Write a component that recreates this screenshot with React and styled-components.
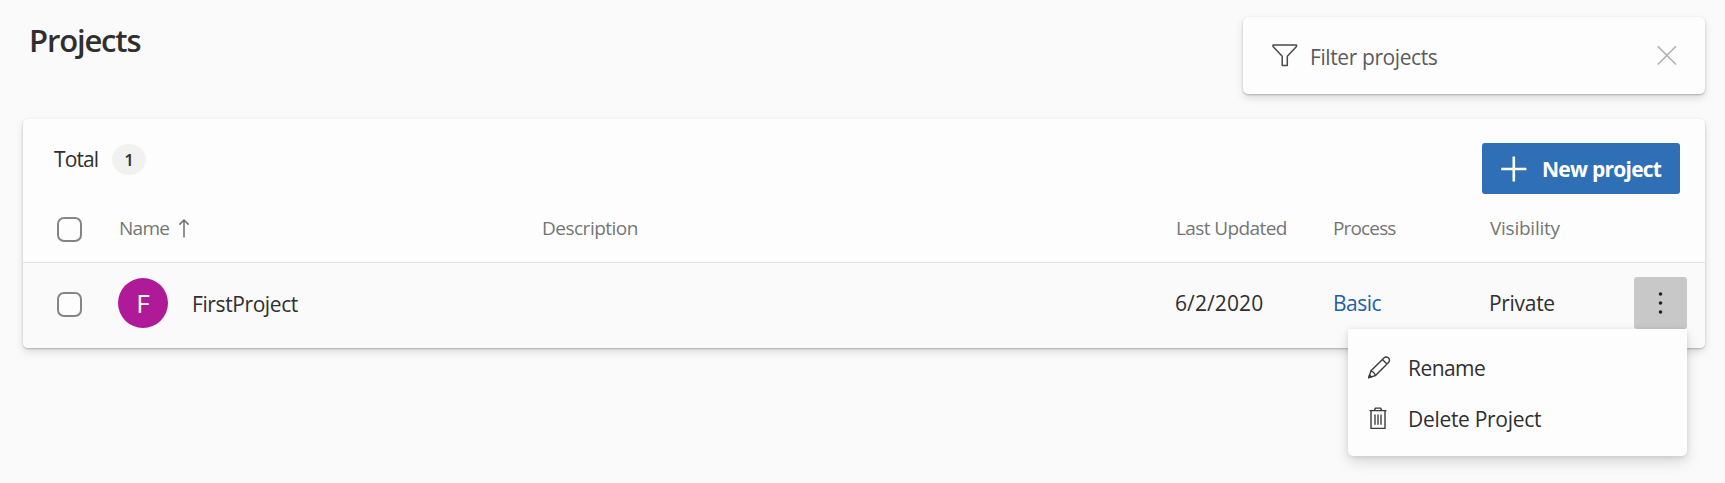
import React from "react";
import styled, { createGlobalStyle } from "styled-components";

const GlobalStyle = createGlobalStyle`
  * { box-sizing: border-box; }
  body {
    margin: 0;
    background: #fafafa;
    color: #302e2e;
    font-family: "Open Sans", "Noto Sans", sans-serif;
    font-size: 21px;
  }
`;

const Page = styled.main`
  height: 483px;
  padding: 17px 20px 0 23px;
  overflow: hidden;
`;

const PageHeader = styled.header`
  display: flex;
  justify-content: space-between;
  align-items: flex-start;
  margin-bottom: 25px;
`;

const Title = styled.h1`
  margin: 0;
  padding-left: 6px;
  font-size: 31px;
  font-weight: 600;
  line-height: 46px;
  letter-spacing: -1.15px;
`;

const Surface = styled.div`
  background: #fdfdfd;
  border-radius: 5px;
  box-shadow: 0 1px 2px rgba(0, 0, 0, 0.24), 0 4px 8px rgba(0, 0, 0, 0.12);
`;

const FilterBar = styled(Surface)`
  display: flex;
  align-items: center;
  width: 462px;
  height: 77px;
  padding: 0 28px;
`;

const Text = styled.span`
  letter-spacing: ${(p) => p.$spacing || 0}px;
  white-space: nowrap;
`;

const FilterText = styled(Text)`
  flex: 1;
  margin-left: 11px;
  padding-top: 3px;
  color: #5c5a5a;
`;

const Card = styled(Surface)`
  height: 229px;
`;

const Toolbar = styled.div`
  display: flex;
  justify-content: space-between;
  align-items: flex-start;
  height: 76px;
  padding: 24px 25px 0 31px;
`;

const Total = styled.div`
  display: flex;
  align-items: center;
  gap: 14px;
  height: 32px;
`;

const TotalLabel = styled(Text)`
  padding-bottom: 1px;
`;

const Badge = styled.span`
  display: flex;
  align-items: center;
  justify-content: center;
  width: 34px;
  height: 31px;
  border-radius: 50%;
  background: #f1f1f0;
  font-size: 17px;
  font-weight: 600;
`;

const PrimaryButton = styled.button`
  display: flex;
  align-items: center;
  gap: 14px;
  width: 198px;
  height: 51px;
  padding: 0 0 0 19px;
  border: 0;
  border-radius: 3px;
  background: #2f6fb5;
  color: #fff;
  font: 700 21px "Open Sans", sans-serif;
`;

const GridRow = styled.div`
  display: grid;
  grid-template-columns: 61px 423px 634px 157px 157px 145px 53px;
  align-items: center;
  padding-left: 34px;
`;

const HeadRow = styled(GridRow)`
  height: 68px;
  border-bottom: 1px solid #e3e3e3;
  color: #757575;
  font-size: 19px;
`;

const HeadText = styled(Text)`
  padding: 0 0 1px 1px;
`;

const BodyRow = styled(GridRow)`
  height: 85px;
  padding-bottom: 5px;
  background: #fafafa;
  border-radius: 0 0 5px 5px;
`;

const HeadName = styled.div`
  display: flex;
  align-items: center;
  gap: 9px;
`;

const Checkbox = styled.span`
  width: 25px;
  height: 25px;
  margin-top: 2px;
  border: 2px solid #858585;
  border-radius: 7px;
  background: #fdfdfd;
`;

const NameCell = styled.div`
  display: flex;
  align-items: center;
  gap: 24px;
`;

const Avatar = styled.span`
  display: flex;
  align-items: center;
  justify-content: center;
  width: 50px;
  height: 50px;
  border-radius: 50%;
  background: #ae1a98;
  color: #fff;
  font-size: 26px;
`;

const ProjectName = styled(Text)`
  padding-top: 2px;
`;

const ProcessLink = styled(Text)`
  padding-left: 1px;
  color: #235fa5;
`;

const MoreWrap = styled.div`
  position: relative;
  height: 52px;
`;

const MoreButton = styled.button`
  display: flex;
  align-items: center;
  justify-content: center;
  width: 53px;
  height: 52px;
  padding: 0;
  border: 0;
  border-radius: 3px;
  background: #c8c8c8;
`;

const Menu = styled.div`
  position: absolute;
  top: 52px;
  right: 0;
  width: 339px;
  height: 127px;
  padding: 13px 0 0 19px;
  border-radius: 0 0 5px 5px;
  background: #fdfdfd;
  box-shadow: 0 6px 14px rgba(0, 0, 0, 0.14), 0 1px 4px rgba(0, 0, 0, 0.1);
`;

const MenuItem = styled.div`
  display: flex;
  align-items: center;
  gap: 16px;
  height: 51px;
`;

const FilterIcon = () => (
  <svg width="28" height="26" viewBox="0 0 28 26" fill="none" stroke="#4a4a4a" strokeWidth="1.5" strokeLinejoin="round">
    <path d="M2 2H25.5V3.4L16.3 13.2V22.6H11.2V13.2L2 3.4Z" />
  </svg>
);

const CloseIcon = () => (
  <svg width="20" height="20" viewBox="0 0 20 20" stroke="#b0b0b0" strokeWidth="1.6">
    <path d="M.8 .3L19 18.5M19 .3L.8 18.5" />
  </svg>
);

const PlusIcon = () => (
  <svg width="27" height="26" viewBox="0 0 27 26" stroke="#fff" strokeWidth="2.6">
    <path d="M.2 13H25.4M12.8 .6V25.4" />
  </svg>
);

const SortIcon = () => (
  <svg width="12" height="20" viewBox="0 0 12 20" fill="none" stroke="#707070" strokeWidth="1.5">
    <path d="M6 18.6V1.2M1.4 5.6L6 1L10.6 5.6" />
  </svg>
);

const MoreIcon = () => (
  <svg width="6" height="24" viewBox="0 0 6 24" fill="#222">
    <circle cx="2.5" cy="3" r="1.8" />
    <circle cx="2.5" cy="12" r="1.8" />
    <circle cx="2.5" cy="21" r="1.8" />
  </svg>
);

const PencilIcon = () => (
  <svg width="25" height="24" viewBox="0 0 25 24" fill="none" stroke="#3c3a3a" strokeWidth="1.4" strokeLinejoin="round">
    <path d="M1.8 21.7L3.8 15.1L16.9 2C18.1 .8 20 .8 21.3 1.8C22.8 3.1 22.8 5.1 21.5 6.4L8.3 19.7ZM3.8 15.1C6 15.5 7.8 17.3 8.3 19.7M15.4 3.5L20 7.9" />
    <path d="M1.8 21.7L2.5 19L4.5 20.9Z" fill="#3c3a3a" />
  </svg>
);

const TrashIcon = () => (
  <svg width="25" height="24" viewBox="0 0 25 24" fill="none" stroke="#3c3a3a" strokeWidth="1.4">
    <path d="M2.5 3.6H19.5M4 3.6V21.4H18V3.6M7.4 3.4L8.4 1.1H13.6L14.6 3.4" strokeLinejoin="round" />
    <path d="M8 7.4V17.8M11 7.4V17.8M14 7.4V17.8" strokeWidth="1.6" stroke="#5a5858" />
  </svg>
);

export default function App() {
  return (
    <>
      <GlobalStyle />
      <Page>
        <PageHeader>
          <Title>Projects</Title>
          <FilterBar>
            <FilterIcon />
            <FilterText $spacing={-0.4}>Filter projects</FilterText>
            <CloseIcon />
          </FilterBar>
        </PageHeader>
        <Card>
          <Toolbar>
            <Total>
              <TotalLabel $spacing={-0.9}>Total</TotalLabel>
              <Badge>1</Badge>
            </Total>
            <PrimaryButton>
              <PlusIcon />
              <Text $spacing={-0.75}>New project</Text>
            </PrimaryButton>
          </Toolbar>
          <HeadRow>
            <Checkbox />
            <HeadName>
              <HeadText $spacing={-0.7}>Name</HeadText>
              <SortIcon />
            </HeadName>
            <HeadText $spacing={-0.5}>Description</HeadText>
            <HeadText $spacing={-0.6}>Last Updated</HeadText>
            <HeadText $spacing={-0.85}>Process</HeadText>
            <HeadText $spacing={-0.25}>Visibility</HeadText>
          </HeadRow>
          <BodyRow>
            <Checkbox />
            <NameCell>
              <Avatar>F</Avatar>
              <ProjectName $spacing={-0.4}>FirstProject</ProjectName>
            </NameCell>
            <span />
            <Text $spacing={0.1}>6/2/2020</Text>
            <ProcessLink $spacing={-0.5}>Basic</ProcessLink>
            <Text $spacing={-0.3}>Private</Text>
            <MoreWrap>
              <MoreButton aria-label="More options">
                <MoreIcon />
              </MoreButton>
              <Menu>
                <MenuItem>
                  <PencilIcon />
                  <Text $spacing={-0.55}>Rename</Text>
                </MenuItem>
                <MenuItem>
                  <TrashIcon />
                  <Text $spacing={-0.3}>Delete Project</Text>
                </MenuItem>
              </Menu>
            </MoreWrap>
          </BodyRow>
        </Card>
      </Page>
    </>
  );
}
